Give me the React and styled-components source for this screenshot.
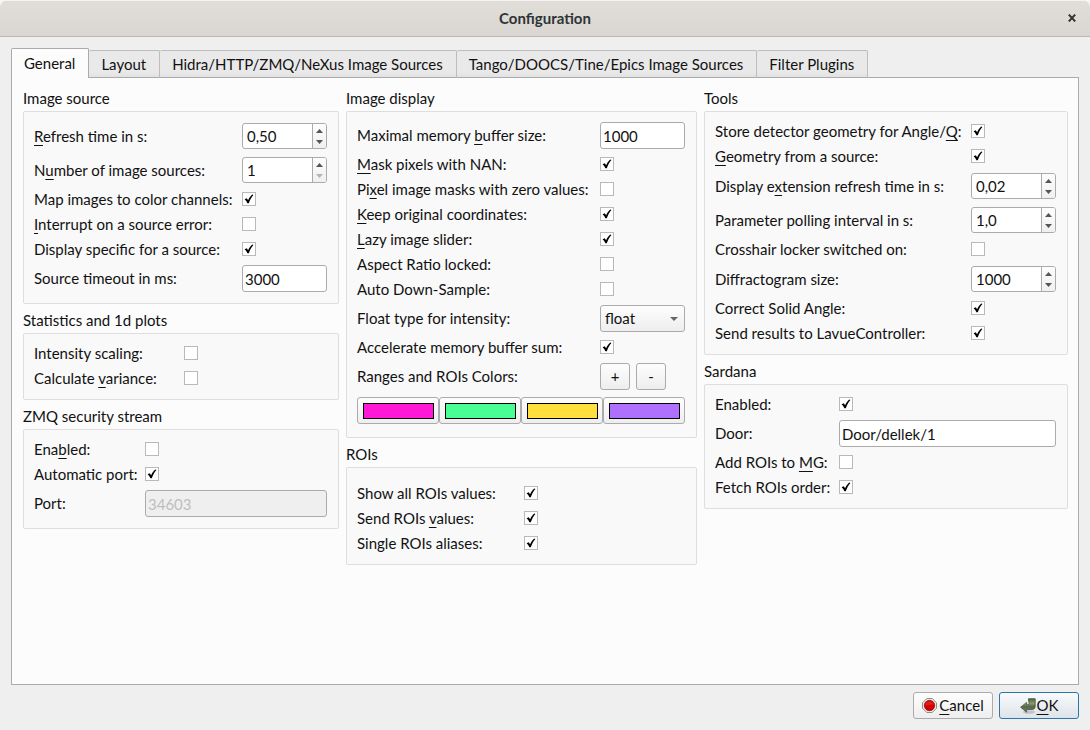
import React, { useId, useState } from "react";
import styled, { createGlobalStyle } from "styled-components";

const GlobalStyle = createGlobalStyle`
  *, *::before, *::after { box-sizing: border-box; }
  body { margin: 0; background: #f6f6f6; }
  body, button, input, select {
    font-family: Lato, "Noto Sans", sans-serif;
    font-size: 15px;
    line-height: 19px;
    color: #111;
  }
`;

const Dialog = styled.main`
  display: flex;
  flex-direction: column;
  min-height: 100vh;
  background: #efefef;
  border-radius: 8px 8px 0 0;
  overflow: hidden;
`;

const TitleBar = styled.header`
  display: grid;
  grid-template-columns: 36px 1fr 36px;
  align-items: center;
  height: 37px;
  background: linear-gradient(#e1deda, #dad6d1);
  border-top: 1px solid #f4f3f2;
  border-bottom: 1px solid #bfb8b1;
`;

const Title = styled.h1`
  grid-column: 2;
  margin: 0;
  text-align: center;
  font-size: 15px;
  font-weight: 700;
  color: #2e3436;
`;

const CloseButton = styled.button`
  display: flex;
  align-items: center;
  justify-content: center;
  height: 24px;
  padding: 0 0 2px;
  border: 0;
  background: none;
`;

const Body = styled.div`
  flex: 1;
  display: flex;
  flex-direction: column;
  padding: 11px;
`;

const TabList = styled.nav`
  display: flex;
  align-items: flex-end;
  margin-bottom: -1px;
`;

const Tab = styled.button`
  height: ${(p) => (p.$active ? 30 : 28)}px;
  padding: ${(p) => (p.$active ? 0 : 1)}px 13px 0 12px;
  white-space: nowrap;
  border: 1px solid ${(p) => (p.$active ? "#ababab" : "#bdbdbd")};
  border-left-width: ${(p) => (p.$active ? 1 : 0)}px;
  border-bottom: ${(p) => (p.$active ? "0" : "1px solid #ababab")};
  border-radius: 2px 2px 0 0;
  background: ${(p) => (p.$active ? "#fcfcfc" : "linear-gradient(#e9e9e9 80%, #e2e2e2)")};
  z-index: 1;
`;

const TabPanel = styled.section`
  flex: 1;
  display: grid;
  grid-template-columns: 316fr 351fr 364fr;
  align-items: start;
  gap: 7px;
  padding: 4px 10px 10px 11px;
  border: 1px solid #ababab;
  background: #fcfcfc;
`;

const Column = styled.div`
  display: flex;
  flex-direction: column;
`;

const GroupBox = styled.section`
  display: flex;
  flex-direction: column;
  padding-top: 5px;
`;

const GroupTitle = styled.h2`
  margin: 0;
  height: 24px;
  font-size: 15px;
  line-height: 22px;
  font-weight: 400;
`;

const GroupFrame = styled.div`
  display: flex;
  flex-direction: column;
  gap: 6px;
  padding: ${(p) => (p.$roomy ? 16 : 10)}px 11px 11px 10px;
  border: 1px solid #dedede;
  border-radius: 2px;
  background: #f9f9f9;
`;

const Row = styled.div`
  display: grid;
  grid-template-columns: ${(p) => p.$label}px 1fr;
  align-items: center;
  min-height: ${(p) => p.$height}px;
`;

const Label = styled.label`
  white-space: nowrap;
`;

const Mnemonic = styled.span`
  text-decoration: underline 1px;
  text-underline-offset: 3px;
  text-decoration-skip-ink: none;
`;

const CheckShell = styled.span`
  display: grid;
  width: 14px;
  height: 14px;
  margin-bottom: 1px;
  > * { grid-area: 1 / 1; }
  > svg { pointer-events: none; }
`;

const CheckInput = styled.input`
  appearance: none;
  width: 14px;
  height: 14px;
  margin: 0;
  border: 1px solid #b9b9b9;
  background: #fff;
`;

const Field = styled.input`
  width: 100%;
  min-width: 0;
  height: 27px;
  padding: 0 2px;
  border: 1px solid #ababab;
  border-radius: 3px;
  background: #fff;
  &:disabled { background: #efefef; color: #bebebe; }
`;

const SpinShell = styled.span`
  display: grid;
  grid-template-columns: 1fr 14px;
  height: 26px;
  border: 1px solid #ababab;
  border-radius: 3px;
  overflow: hidden;
  background: #fff;
`;

const SpinInput = styled.input`
  width: 100%;
  min-width: 0;
  padding: 0 4px;
  border: 0;
  background: none;
`;

const SpinButtons = styled.span`
  display: grid;
  grid-template-rows: 1fr 1fr;
  padding: 1px 0;
  border-left: 1px solid #ababab;
  background: linear-gradient(#fdfdfd, #f0f0f0);
`;

const SpinButton = styled.button`
  display: flex;
  align-items: center;
  justify-content: center;
  padding: 0;
  border: 0;
  background: none;
  color: #555;
  &:disabled { color: #b4b4b4; }
`;

const SelectShell = styled.span`
  display: grid;
  align-items: center;
  > * { grid-area: 1 / 1; }
  > svg { justify-self: end; margin-right: 7px; pointer-events: none; }
`;

const Select = styled.select`
  appearance: none;
  width: 100%;
  height: 27px;
  padding: 0 4px;
  border: 1px solid #ababab;
  border-radius: 3px;
  background: linear-gradient(#fdfdfd, #eee);
`;

const ButtonRow = styled.div`
  display: flex;
  gap: 6px;
`;

const PushButton = styled.button`
  display: flex;
  align-items: center;
  justify-content: center;
  gap: 1px;
  width: ${(p) => p.$width}px;
  height: 27px;
  padding: 0;
  border: 1px solid ${(p) => (p.$primary ? "#2b76ab" : "#ababab")};
  border-radius: 3px;
  background: ${(p) => (p.$primary ? "linear-gradient(#f9fbfc, #dde3e9)" : "linear-gradient(#fdfdfd, #eee)")};
`;

const ColorRow = styled.div`
  display: grid;
  grid-template-columns: repeat(4, 1fr);
  padding: 1px 0 2px;
`;

const ColorButton = styled.button`
  height: 27px;
  padding: 5px 4px 5px 5px;
  border: 1px solid #ababab;
  border-radius: 3px;
  background: linear-gradient(#fdfdfd, #eee);
`;

const Swatch = styled.span`
  display: block;
  height: 16px;
  border: 1px solid #000;
  background: ${(p) => p.$color};
`;

const Footer = styled.footer`
  display: flex;
  justify-content: flex-end;
  gap: 6px;
  padding-top: 7px;
`;

/* An ampersand marks the letter that follows as the keyboard mnemonic. */
function Text({ children }) {
  const at = children.indexOf("&");
  if (at < 0) return children;
  return (
    <>
      {children.slice(0, at)}
      <Mnemonic>{children[at + 1]}</Mnemonic>
      {children.slice(at + 2)}
    </>
  );
}

function Group({ title, roomy, children }) {
  return (
    <GroupBox>
      <GroupTitle>{title}</GroupTitle>
      <GroupFrame $roomy={roomy}>{children}</GroupFrame>
    </GroupBox>
  );
}

function CheckRow({ text, label, on }) {
  const id = useId();
  const [checked, setChecked] = useState(Boolean(on));
  return (
    <Row $label={label} $height={19}>
      <Label htmlFor={id}><Text>{text}</Text></Label>
      <CheckShell>
        <CheckInput id={id} type="checkbox" checked={checked} onChange={() => setChecked(!checked)} />
        {checked && (
          <svg width="14" height="14" viewBox="0 0 14 14" aria-hidden="true">
            <path d="M2.6 7.2 4.8 6.2 6.1 8.3C7.2 6 8.5 4 10.2 2.6L11.4 3.1C9.4 5.5 7.9 8.2 6.8 11.2H5.4C4.8 9.7 3.8 8.3 2.6 7.2Z" fill="#000" />
          </svg>
        )}
      </CheckShell>
    </Row>
  );
}

function FieldRow({ text, label, value, disabled }) {
  const id = useId();
  return (
    <Row $label={label} $height={27}>
      <Label htmlFor={id}><Text>{text}</Text></Label>
      <Field id={id} defaultValue={value} disabled={disabled} />
    </Row>
  );
}

function SpinRow({ text, label, value, atMinimum }) {
  const id = useId();
  return (
    <Row $label={label} $height={28}>
      <Label htmlFor={id}><Text>{text}</Text></Label>
      <SpinShell>
        <SpinInput id={id} inputMode="decimal" defaultValue={value} />
        <SpinButtons>
          <SpinButton type="button" aria-label="Increase">
            <svg width="7" height="4" viewBox="0 0 7 4"><path d="M0 4 3.5 0 7 4Z" fill="currentColor" /></svg>
          </SpinButton>
          <SpinButton type="button" aria-label="Decrease" disabled={atMinimum}>
            <svg width="7" height="4" viewBox="0 0 7 4"><path d="M0 0H7L3.5 4Z" fill="currentColor" /></svg>
          </SpinButton>
        </SpinButtons>
      </SpinShell>
    </Row>
  );
}

function SelectRow({ text, label, options }) {
  const id = useId();
  return (
    <Row $label={label} $height={27}>
      <Label htmlFor={id}>{text}</Label>
      <SelectShell>
        <Select id={id}>
          {options.map((o) => <option key={o}>{o}</option>)}
        </Select>
        <svg width="8" height="4" viewBox="0 0 8 4" aria-hidden="true"><path d="M0 0H8L4 4Z" fill="#666" /></svg>
      </SelectShell>
    </Row>
  );
}

function StopIcon() {
  return (
    <svg width="16" height="16" viewBox="0 0 16 16" aria-hidden="true">
      <path d="M4.8 .5H10.2L14.5 4.8V10.2L10.2 14.5H4.8L.5 10.2V4.8Z" fill="#ecece8" stroke="#8b8d88" />
      <circle cx="7.5" cy="7.5" r="5.2" fill="#d40000" stroke="#a80000" strokeWidth=".7" />
      <path d="M3.2 7A4.4 4.4 0 0 1 11.8 7C9.4 6 5.6 8.2 3.2 7Z" fill="#ea3030" opacity=".6" />
    </svg>
  );
}

function EnterIcon() {
  return (
    <svg width="16" height="16" viewBox="0 0 16 16" aria-hidden="true">
      <defs>
        <linearGradient id="enter-fill" x1="0" y1="0" x2="0" y2="1">
          <stop offset="0" stopColor="#53633f" />
          <stop offset=".35" stopColor="#8a9873" />
          <stop offset=".6" stopColor="#56664a" />
          <stop offset="1" stopColor="#77876a" />
        </linearGradient>
      </defs>
      <ellipse cx="9" cy="14" rx="6" ry="1.8" fill="#000" opacity=".16" />
      <path d="M8.5 .7H15.2V8.2C15.2 10.4 14 11.5 12 11.5H6.6V14.2L.6 9.2 6.6 4.4V6.8H8C8.7 6.8 9 6.4 9 5.6V3.2H8.5Z" fill="url(#enter-fill)" stroke="#46543a" strokeWidth=".8" />
    </svg>
  );
}

const TABS = [
  "General",
  "Layout",
  "Hidra/HTTP/ZMQ/NeXus Image Sources",
  "Tango/DOOCS/Tine/Epics Image Sources",
  "Filter Plugins",
];

const COLORS = [
  ["Pink", "#ff18d5"],
  ["Green", "#47ff92"],
  ["Yellow", "#ffdf3d"],
  ["Purple", "#b070ff"],
];

export default function App() {
  return (
    <>
      <GlobalStyle />
      <Dialog>
        <TitleBar>
          <Title>Configuration</Title>
          <CloseButton type="button" aria-label="Close">
            <svg width="8" height="8" viewBox="0 0 8 8"><path d="M.8 .6 7.2 7.4M7.2 .6 .8 7.4" stroke="#2e3436" strokeWidth="2" /></svg>
          </CloseButton>
        </TitleBar>
        <Body>
          <TabList>
            {TABS.map((t, i) => <Tab key={t} type="button" $active={i === 0}>{t}</Tab>)}
          </TabList>
          <TabPanel>
            <Column>
              <Group title="Image source">
                <SpinRow label={208} text="&Refresh time in s:" value="0,50" />
                <SpinRow label={208} text="N&umber of image sources:" value="1" atMinimum />
                <CheckRow label={208} text="Map images to color channels:" on />
                <CheckRow label={208} text="&Interrupt on a source error:" />
                <CheckRow label={208} text="Display specific for a source:" on />
                <FieldRow label={208} text="Source timeout in ms:" value="3000" />
              </Group>
              <Group title="Statistics and 1d plots">
                <CheckRow label={150} text="Intensity scaling:" />
                <CheckRow label={150} text="Calculate &variance:" />
              </Group>
              <Group title="ZMQ security stream">
                <CheckRow label={111} text="Ena&bled:" />
                <CheckRow label={111} text="Automatic port:" on />
                <FieldRow label={111} text="Port:" value="34603" disabled />
              </Group>
            </Column>
            <Column>
              <Group title="Image display">
                <FieldRow label={243} text="Maximal memory &buffer size:" value="1000" />
                <CheckRow label={243} text="&Mask pixels with NAN:" on />
                <CheckRow label={243} text="Pi&xel image masks with zero values:" />
                <CheckRow label={243} text="&Keep original coordinates:" on />
                <CheckRow label={243} text="&Lazy image slider:" on />
                <CheckRow label={243} text="Aspect Ratio locked:" />
                <CheckRow label={243} text="Auto Down-Sample:" />
                <SelectRow label={243} text="Float type for intensity:" options={["float"]} />
                <CheckRow label={243} text="Accelerate memory buffer sum:" on />
                <Row $label={243} $height={27}>
                  <span>Ranges and ROIs Colors:</span>
                  <ButtonRow>
                    <PushButton type="button" $width={30}>+</PushButton>
                    <PushButton type="button" $width={30}>-</PushButton>
                  </ButtonRow>
                </Row>
                <ColorRow>
                  {COLORS.map(([name, color]) => (
                    <ColorButton key={name} type="button" aria-label={name}>
                      <Swatch $color={color} />
                    </ColorButton>
                  ))}
                </ColorRow>
              </Group>
              <Group title="ROIs" roomy>
                <CheckRow label={167} text="Show all ROIs values:" on />
                <CheckRow label={167} text="Send ROIs &values:" on />
                <CheckRow label={167} text="Single ROIs aliases:" on />
              </Group>
            </Column>
            <Column>
              <Group title="Tools">
                <CheckRow label={256} text="Store detector geometry for Angle/&Q:" on />
                <CheckRow label={256} text="&Geometry from a source:" on />
                <SpinRow label={256} text="Display e&xtension refresh time in s:" value="0,02" />
                <SpinRow label={256} text="Parameter polling interval in s:" value="1,0" />
                <CheckRow label={256} text="Crosshair locker switched on:" />
                <SpinRow label={256} text="Diffractogram size:" value="1000" />
                <CheckRow label={256} text="Correct Solid Angle:" on />
                <CheckRow label={256} text="Send results to LavueController:" on />
              </Group>
              <Group title="Sardana">
                <CheckRow label={124} text="Enabled:" on />
                <FieldRow label={124} text="Door:" value="Door/dellek/1" />
                <CheckRow label={124} text="Add ROIs to &MG:" />
                <CheckRow label={124} text="Fetch ROIs order:" on />
              </Group>
            </Column>
          </TabPanel>
          <Footer>
            <PushButton type="button" $width={80}>
              <StopIcon />
              <span><Text>&Cancel</Text></span>
            </PushButton>
            <PushButton type="button" $width={80} $primary>
              <EnterIcon />
              <span><Text>&OK</Text></span>
            </PushButton>
          </Footer>
        </Body>
      </Dialog>
    </>
  );
}
